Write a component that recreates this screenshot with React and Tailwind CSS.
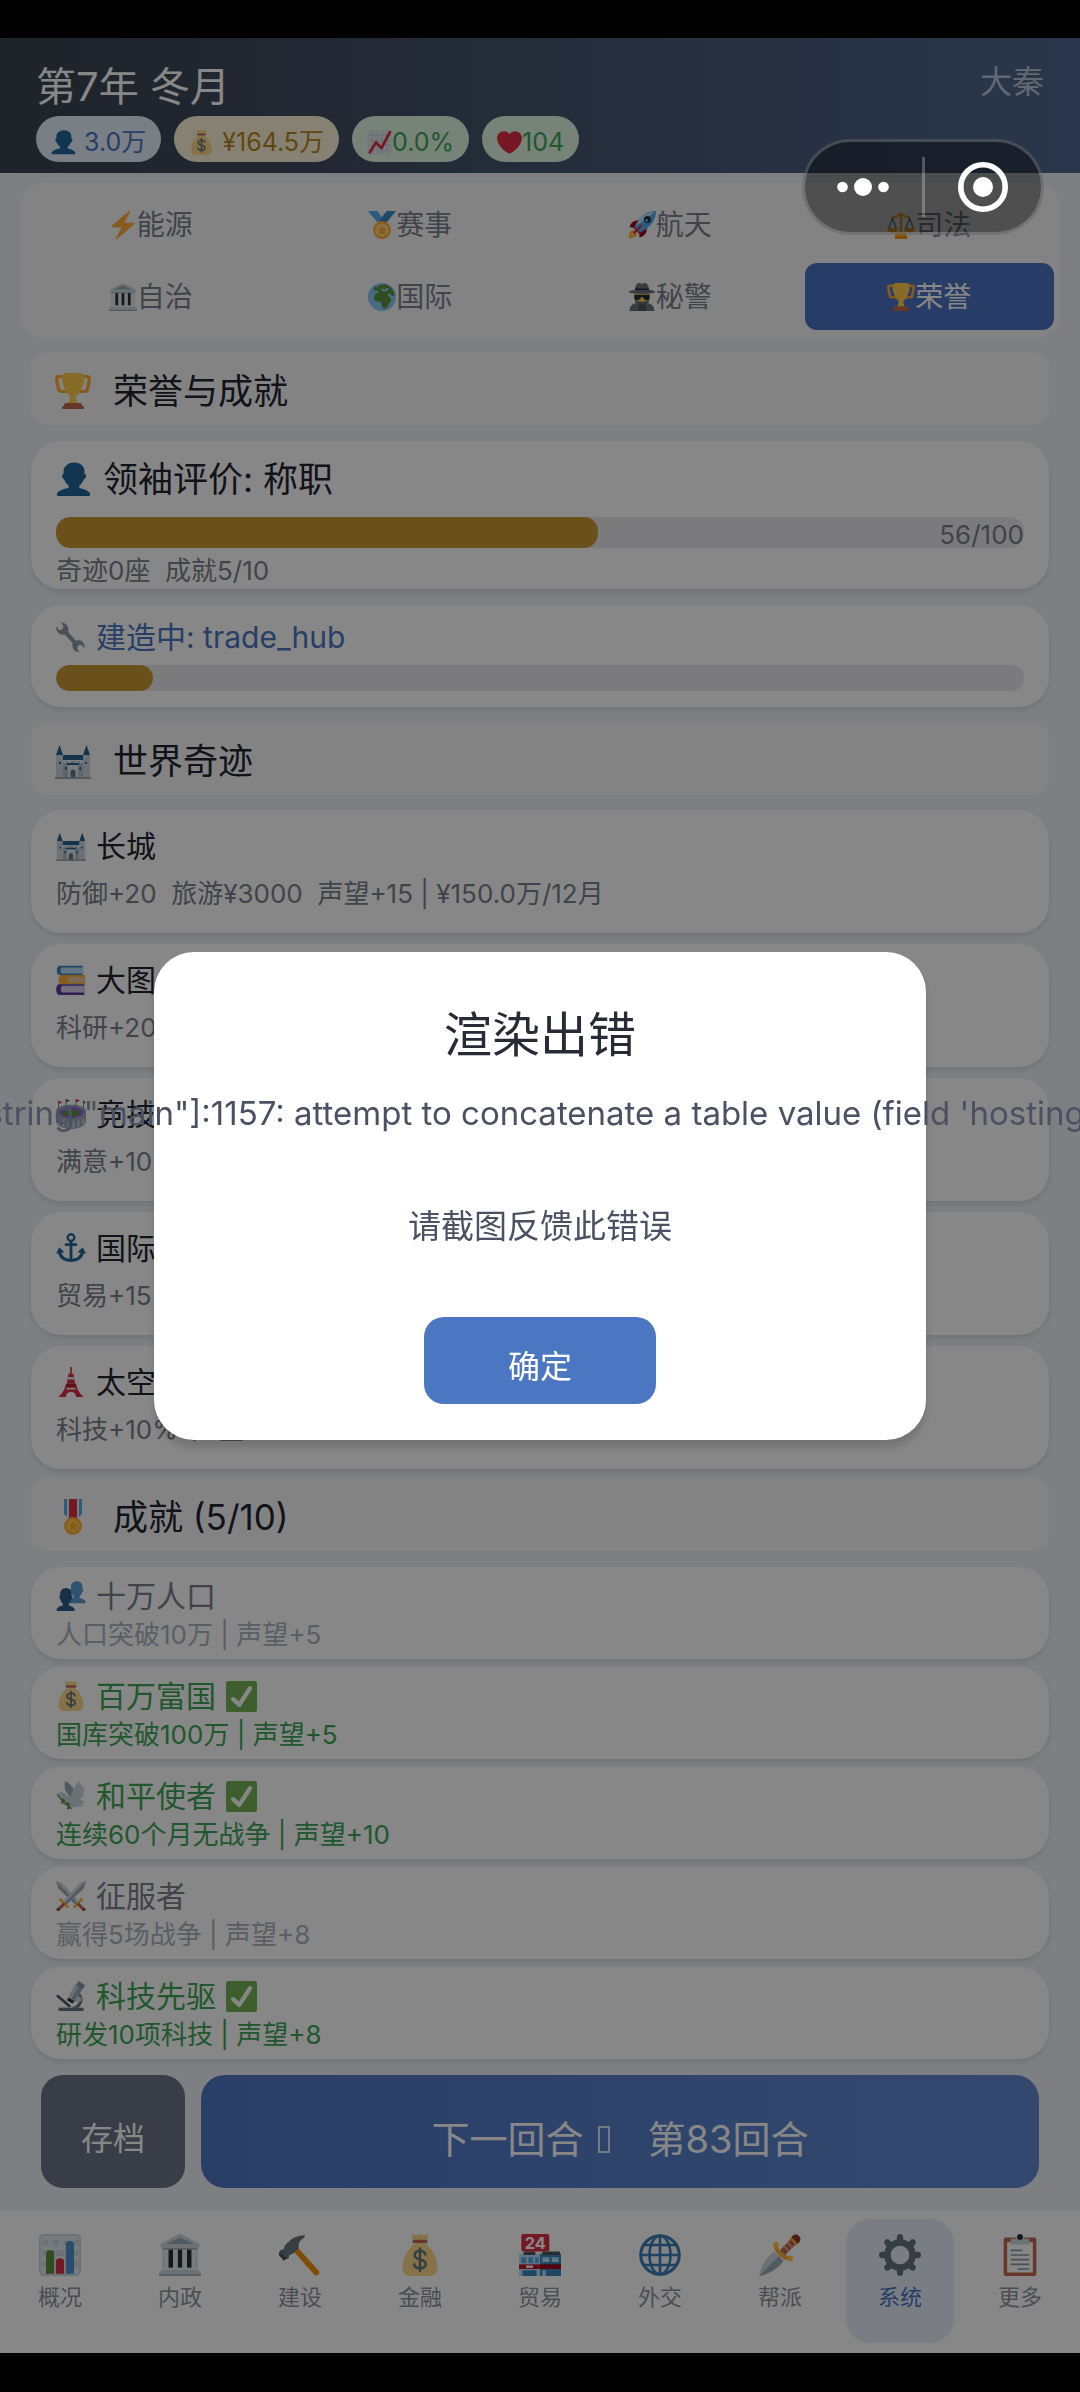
import { useState } from 'react';
import clsx from 'clsx';

const TROPHY_HANDLES =
  'M5.123 5h6C12.227 5 13 4.896 13 6V4c0-1.104-.773-2-1.877-2h-8c-2 0-3.583 2.125-3 5 0 0 1.791 9.375 1.917 9.958C2.373 18.5 4.164 20 6.081 20h6.958c1.105 0-.039-1.896-.039-3v-2c0 1.104-.773 2-1.877 2h-4c-1.104 0-1.833-1.042-2-2S3.539 7.667 3.539 7.667C3.206 5.75 4.018 5 5.123 5zm25.812 0h-6C23.831 5 22 4.896 22 6V4c0-1.104 1.831-2 2.935-2h8c2 0 3.584 2.125 3 5 0 0-1.633 9.419-1.771 10-.354 1.5-2.042 3-4 3h-7.146C21.914 20 22 18.104 22 17v-2c0 1.104 1.831 2 2.935 2h4c1.104 0 1.834-1.042 2-2s1.584-7.333 1.584-7.333C32.851 5.75 32.04 5 30.935 5z';

const BUST =
  'M24 26.799v-2.566c2-1.348 4.08-3.779 4.703-6.896.186.103.206.17.413.17.991 0 1.709-1.287 1.709-2.873 0-1.562-.823-2.827-1.794-2.865.187-.674.293-1.577.293-2.735C29.324 5.168 26 .527 18.541.527c-6.629 0-10.777 4.641-10.777 8.507 0 1.123.069 2.043.188 2.755-.911.137-1.629 1.352-1.629 2.845 0 1.587.804 2.873 1.796 2.873.206 0 .025-.067.209-.17C8.952 20.453 11 22.885 13 24.232v2.414c-5 .645-12 3.437-12 6.23v1.061C1 35 2.076 35 3.137 35h29.725C33.924 35 35 35 35 33.938v-1.061c0-2.615-6-5.225-11-6.078z';

// All drawings share a 36 x 36 grid
const ICONS = {
  person: <path fill="#226699" d={BUST} />,
  people: (
    <>
      <g transform="translate(13 0) scale(0.64 0.76)">
        <path fill="#5C9BD5" d={BUST} />
      </g>
      <g transform="translate(0 8) scale(0.64 0.8)">
        <path fill="#2A5C8C" d={BUST} />
      </g>
    </>
  ),
  bag: (
    <>
      <path fill="#FDD888" d="M31.9 21.8C30.1 15.5 24.8 9.5 22.6 8.6c-1.5-.6-7.7-.6-9.2 0C11.2 9.5 5.9 15.5 4.1 21.8 2.3 27.5 1.5 36 10.5 36h15c9 0 8.2-8.5 6.4-14.2z" />
      <path fill="#FDD888" d="M12 5c-1-2-1.5-4-.5-4.8 1-.6 2.5 1 3.5 1S16.5 0 18 0s2 1.2 3 1.2 2.5-1.6 3.5-1C25.5 1 25 3 24 5z" />
      <path fill="#BF6952" d="M24.5 6.5c0 .8-.6 1.5-1.4 1.5H12.9c-.8 0-1.4-.7-1.4-1.5S12.1 5 12.9 5h10.2c.8 0 1.4.7 1.4 1.5z" />
      <path fill="none" stroke="#67757F" strokeWidth="2.2" strokeLinecap="round" d="M22.7 17.5c-.6-2-2.5-3-4.7-3-2.7 0-4.6 1.4-4.6 3.7 0 5 9.5 2.5 9.5 7.5 0 2.4-2.2 3.8-4.9 3.8-2.6 0-4.6-1.2-5-3.5M18 12.5v19" />
    </>
  ),
  chartUp: (
    <>
      <rect width="36" height="36" rx="3" fill="#E1E8ED" />
      <path stroke="#BDC9D2" strokeWidth="1" fill="none" d="M1 8h34M1 15h34M1 22h34M1 29h34M8 1v34M15 1v34M22 1v34M29 1v34" />
      <path fill="none" stroke="#DD2E44" strokeWidth="4" strokeLinecap="round" strokeLinejoin="round" d="M4 32l9-14 8 8L33 3" />
    </>
  ),
  heart: (
    <path fill="#DD2E44" d="M35.885 11.833c0-5.45-4.418-9.868-9.867-9.868-3.308 0-6.227 1.633-8.018 4.129-1.791-2.496-4.71-4.129-8.017-4.129-5.45 0-9.868 4.417-9.868 9.868 0 .772.098 1.52.266 2.241C1.751 22.587 11.216 31.568 18 34.034c6.783-2.466 16.249-11.447 17.617-19.959.17-.721.268-1.469.268-2.242z" />
  ),
  bolt: (
    <path fill="#FFAC33" d="M32.938 15.651C32.792 15.26 32.418 15 32 15H19.925L26.89 1.458c.219-.426.106-.947-.271-1.243C26.437.071 26.218 0 26 0c-.233 0-.466.082-.653.243L18 6.588 3.347 19.243c-.316.273-.43.714-.284 1.105S3.582 21 4 21h12.075L9.11 34.542c-.219.426-.106.947.271 1.243.182.144.401.215.619.215.233 0 .466-.082.653-.243L18 29.412l14.653-12.655c.317-.273.43-.714.285-1.106z" />
  ),
  medal: (
    <>
      <path fill="#55ACEE" d="M0 0h12l9 12-7 5z" />
      <path fill="#3B88C3" d="M36 0H24l-9 12 7 5z" />
      <circle cx="18" cy="24.5" r="11.5" fill="#FFAC33" />
      <circle cx="18" cy="24.5" r="8.5" fill="#FFD983" />
      <path fill="#FFAC33" d="M18 18l2 4.3 4.7.6-3.5 3.2.9 4.7L18 28.5l-4.1 2.3.9-4.7-3.5-3.2 4.7-.6z" />
    </>
  ),
  rocket: (
    <>
      <path fill="#FFAC33" d="M1 35c0-5 1-9 5-11l6 6c-2 4-6 5-11 5z" />
      <path fill="#FFCC4D" d="M4 32c0-3 1-5 3-6l3 3c-1 2-3 3-6 3z" />
      <path fill="#A0041E" d="M2 21c2-8 8-10 15-9l-7 10zM15 34c8-2 10-8 9-15l-10 7z" />
      <path fill="#A0041E" d="M7 22l4-3 6 6-3 4z" />
      <path fill="#55ACEE" d="M36 0c0 8-3 15-10 21-3 3-7 5-11 7l-7-7c2-4 4-8 7-11C21 3 28 0 36 0z" />
      <path fill="#BBDDF5" d="M34 1c-8 1-14 4-19 9-2 3-4 6-5 9 8-5 17-11 24-18z" />
      <circle cx="25" cy="11" r="4.5" fill="#292F33" />
      <circle cx="24" cy="12" r="2" fill="#55ACEE" />
      <path fill="none" stroke="#DD2E44" strokeWidth="3" strokeLinecap="round" d="M8 28l9-9" />
    </>
  ),
  scales: (
    <>
      <path fill="#FFAC33" d="M16.5 3a1.5 1.5 0 013 0v26h-3z" />
      <path fill="#FFAC33" d="M11 30c0-2 3-3 7-3s7 1 7 3v3H11z" />
      <path fill="#F4900C" d="M10 32h16v4H10z" />
      <path fill="none" stroke="#FFAC33" strokeWidth="2.5" strokeLinecap="round" d="M7 8c5 1 6-3 11-3s6 4 11 3" />
      <path fill="none" stroke="#66757F" strokeWidth="1.6" d="M7 9L2 23M7 9l5 14M29 9l-5 14M29 9l5 14" />
      <path fill="#FFAC33" d="M0 22h14c0 4-3 6-7 6s-7-2-7-6zM22 22h14c0 4-3 6-7 6s-7-2-7-6z" />
    </>
  ),
  bank: (
    <>
      <path fill="#CCD6DD" d="M3 9h30v24H3z" />
      <path fill="#292F33" d="M8 13h4v16H8zM16 13h4v16h-4zM24 13h4v16h-4z" />
      <path fill="#E1E8ED" d="M4 12h4v18H4zM12 12h4v18h-4zM20 12h4v18h-4zM28 12h4v18h-4z" />
      <path fill="#CCD6DD" d="M1 10c0-1 1-2 3-3L17 .3c.7-.4 1.3-.4 2 0L32 7c2 1 3 2 3 3s-1 2-2 2H3c-1 0-2-1-2-2z" />
      <path fill="#99AAB5" d="M6 8.500L18 3l12 5.500z" />
      <path fill="#E1E8ED" d="M3 29h30v3H3z" />
      <path fill="#CCD6DD" d="M0 34c0-1.500 1-3 3-3h30c2 0 3 1.500 3 3v2H0z" />
      <path fill="#99AAB5" d="M3 12h30v1.200H3zM0 34.500h36V36H0z" />
    </>
  ),
  earth: (
    <>
      <circle cx="18" cy="18" r="18" fill="#88C9F9" />
      <path fill="#5C913B" d="M15 3c4-2 9-1 12 1 4 3 7 8 7 12l-3 1-3-4-3 2 4 5c2 2 0 5-2 6-1 4-3 7-6 7-3-1-3-5-4-8-1-2-4-1-7-2-3-2-3-6 0-9 1-2 3-1 5-2l-4-2c-2-3 1-6 4-7z" />
      <path fill="#88C9F9" d="M17 7l5 1 3-2 2 2-4 3-6-1z" />
      <path fill="#5C913B" d="M7 7l3-3 1 3-3 4z" />
    </>
  ),
  spy: (
    <>
      <circle cx="18" cy="17" r="10" fill="#FFCC4D" />
      <path fill="#66757F" d="M2 36c0-7 4-9 8-10l-2-6c4 3 7 4 10 4s6-1 10-4l-2 6c4 1 8 3 8 10z" />
      <path fill="#4B545D" d="M15 25l3 3 4-3 2 11H13z" />
      <path fill="#66757F" d="M9 9c0-6 3-9 5-9 2 0 3 1 4 1s2-1 4-1 5 3 5 9z" />
      <path fill="#292F33" d="M9 7h18v4H9z" />
      <path fill="#66757F" d="M1 12c0-2 5-3 8-3h18c3 0 8 1 8 3 0 1-7 2-17 2S1 13 1 12z" />
      <path fill="#292F33" d="M8 15h20v3c0 3-2 4-4 4-3 0-4-2-5-4h-2c-1 2-2 4-5 4-2 0-4-1-4-4z" />
    </>
  ),
  trophy: (
    <>
      <path fill="#FFAC33" d={TROPHY_HANDLES} />
      <path fill="#FFCC4D" d="M20.832 22c0-6.958-2.709 0-2.709 0s-3-6.958-3 0-3.291 10-3.291 10h12.292c-.001 0-3.292-3.042-3.292-10z" />
      <path fill="#FFCC4D" d="M29.123 6.577c0 6.775-6.77 18.423-11 18.423-4.231 0-11-11.649-11-18.423 0-5.775 2.75-6.577 3.75-6.577h14.5c1 0 3.75.802 3.75 6.577z" />
      <path fill="#C1694F" d="M27 33c0 1.104.227 2-.877 2h-16C9.018 35 9 34.104 9 33v-1c0-1.104 1.164-2 2.206-2h13.917c1.042 0 1.877.896 1.877 2v1z" />
      <path fill="#C1694F" d="M29 34.625c0 .76.165 1.375-1.252 1.375H8.498C7.206 36 7 35.385 7 34.625v-.25C7 33.615 7.738 33 8.498 33h19.25c.759 0 1.252.615 1.252 1.375v.25z" />
    </>
  ),
  wrench: (
    <path fill="#8899A6" d="M28 22c-1.500-.5-3 0-4 .5L14.500 12c.8-2 .6-4.500-.5-6.500C12.500 2.500 9.500.5 6 .3L9 5.500 7.500 9 3.500 9.500.3 5C-.3 8.500 1 12 4 14c2 1.300 4.500 1.600 6.500 1L20 25.500c-.8 2-.5 4.500.8 6.500 1.500 2.500 4 4 7 4l-2.500-4.500 1.500-3.500 4-.5 3.200 4c.8-3-.2-6.500-3-8.500-1-.6-2-1-3-1z" />
  ),
  castle: (
    <>
      <path fill="#CCD6DD" d="M1 12h7v23H1zM28 12h7v23h-7z" />
      <path fill="#B4C0CA" d="M8 18h20v17H8z" />
      <path fill="#2B6090" d="M1 12L4.500 2 8 12zM28 12l3.500-10L35 12zM8 12h20v5H8z" />
      <path fill="#E1E8ED" d="M8 17h3v3H8zM13 17h3v3h-3zM20 17h3v3h-3zM25 17h3v3h-3zM13 22h10v13H13z" />
      <path fill="#2B6090" d="M12 20h12v2H12zM4 19h2v2H4zM30 19h2v2h-2zM10 24h1.500v3H10zM24.500 24H26v3h-1.500z" />
      <path fill="#66757F" d="M15.500 35v-6c0-3 5-3 5 0v6z" />
      <path fill="#99AAB5" d="M0 34h36v2H0z" />
    </>
  ),
  books: (
    <>
      <path fill="#3B88C3" d="M4 1h28v3H7v6h25v2H4c-4 0-4-11 0-11z" />
      <path fill="#BBDDF5" d="M7 3h26v7H7c-2 0-2-7 0-7z" />
      <path fill="#FFAC33" d="M6 12h29v11H6c-4 0-4-11 0-11z" />
      <path fill="#E8C99A" d="M15 14h20v7H15z" />
      <path fill="#5F3A9E" d="M4 23h30v13H4c-5 0-5-13 0-13z" />
      <path fill="#D8CDEB" d="M8 25h26v8H8c-3 0-3-8 0-8z" />
    </>
  ),
  stadium: (
    <>
      <path fill="#99AAB5" d="M0 15c0-5 8-8 18-8s18 3 18 8v12c0 5-8 9-18 9S0 32 0 27z" />
      <ellipse cx="18" cy="16" rx="15" ry="7" fill="#9266CC" />
      <ellipse cx="18" cy="17" rx="10" ry="4" fill="#5C913B" />
      <path fill="none" stroke="#CCD6DD" strokeWidth="2" d="M3 24v7M9 26v8M15 27v8M21 27v8M27 26v8M33 24v7" />
      <path stroke="#66757F" strokeWidth="1" d="M3 2v11M12 0v9M24 0v9M33 2v11" />
      <path fill="#DD2E44" d="M3 2l5 2-5 2zM24 0l5 2-5 2z" />
      <path fill="#3E721D" d="M12 0l5 2-5 2zM33 2l3 2-3 2z" />
    </>
  ),
  anchor: (
    <>
      <circle cx="18" cy="5.5" r="4" fill="none" stroke="#226699" strokeWidth="2.8" />
      <path fill="none" stroke="#226699" strokeWidth="3.4" strokeLinecap="round" d="M18 10v22M12 14h12" />
      <path fill="none" stroke="#226699" strokeWidth="3.8" d="M4 22c1 7 6 11 14 11s13-4 14-11" />
      <path fill="#226699" d="M0 25l4-8 6 6zM36 25l-4-8-6 6z" />
    </>
  ),
  tower: (
    <>
      <path fill="#DD2E44" d="M17 0h2v8h-2zM15 8h6l2 12h-10z" />
      <path fill="#E1E8ED" d="M14.500 12h7l.6 3h-8.200z" />
      <path fill="#BE1931" d="M12 20h12l1 4H11z" />
      <path fill="#DD2E44" d="M11 24h14c2 6 5 9 8 12h-9c0-4-2-6-6-6s-6 2-6 6H3c3-3 6-6 8-12z" />
      <path fill="#E1E8ED" d="M13 25h10l1 2H12z" />
    </>
  ),
  ribbon: (
    <>
      <path fill="#55ACEE" d="M9 0h18v15l-5 5h-8l-5-5z" />
      <path fill="#E1E8ED" d="M12 0h12v19H12z" />
      <path fill="#DD2E44" d="M14 0h8v20h-8z" />
      <circle cx="18" cy="27" r="9" fill="#FFAC33" />
      <circle cx="18" cy="27" r="6.5" fill="#FFCC4D" />
      <path fill="#FFAC33" d="M18 21.500l1.700 3.500 3.800.5-2.800 2.700.7 3.800-3.400-1.800-3.400 1.800.7-3.800-2.800-2.700 3.800-.5z" />
    </>
  ),
  check: (
    <>
      <rect width="36" height="36" rx="3" fill="#77B255" />
      <path fill="#FFF" d="M29.28 6.362c-1.156-.751-2.704-.422-3.458.736L14.936 23.877l-5.029-4.65c-1.014-.938-2.596-.875-3.533.138-.937 1.014-.875 2.596.139 3.533l7.209 6.666c.48.445 1.09.665 1.696.665.673 0 1.534-.282 2.099-1.139.332-.506 12.5-19.27 12.5-19.27.751-1.159.421-2.707-.737-3.458z" />
    </>
  ),
  dove: (
    <>
      <path fill="#99AAB5" d="M20 20C12 16 9 9 11 0c6 3 11 9 13 16z" />
      <path fill="#CCD6DD" d="M18 17C21 12 21 5 28 0c0 4 4 6 6 9 0 8-3 14-9 15z" />
      <path fill="#CCD6DD" d="M3 15c2-2 6-2 8 1 5 3 9 2 14 5l10 4-4 2 3 3-10 1c-6 2-14 0-17-6-1-3-1-5-3-7L0 16z" />
      <path fill="none" stroke="#5C913B" strokeWidth="1.8" strokeLinecap="round" d="M2 17c4 6 10 10 16 16" />
      <path fill="#5C913B" d="M6 22c3-2 5 0 5 2-2 1-4 0-5-2zM12 26c4-1 5 1 5 3-3 0-4-1-5-3zM13 34c0-4 3-5 4-4 0 3-2 5-4 4zM6 27c0-3 2-3 3-3 1 2-1 4-3 3z" />
    </>
  ),
  swords: (
    <>
      <path fill="#CCD6DD" d="M0 0l7 2 20 22-4 4L3 9z" />
      <path fill="#99AAB5" d="M0 0l25 26-2 2L3 9z" />
      <path fill="#CCD6DD" d="M36 0l-7 2L9 24l4 4L33 9z" />
      <path fill="#99AAB5" d="M36 0L11 26l2 2L33 9z" />
      <path fill="none" stroke="#FFAC33" strokeWidth="3" strokeLinecap="round" d="M5 22l9 9M31 22l-9 9" />
      <path fill="none" stroke="#BF6952" strokeWidth="3.6" strokeLinecap="round" d="M9 28l-6 6M27 28l6 6" />
      <circle cx="2.5" cy="34" r="2" fill="#8A4B38" />
      <circle cx="33.5" cy="34" r="2" fill="#8A4B38" />
    </>
  ),
  microscope: (
    <>
      <path fill="#66757F" d="M3 32h30v4H3z" />
      <path fill="#66757F" d="M26 13c7 4 8 13 1 19h-9c9-2 12-8 7-13z" />
      <path fill="#99AAB5" d="M23 4l9 5-8 16-9-5z" />
      <path fill="#CCD6DD" d="M23 4l4 2-9 16-3-2z" />
      <path fill="#8899A6" d="M27 0l8 5-3 5-8-5z" />
      <path fill="#292F33" d="M15 20l7 4-2 3-7-4z" />
      <path fill="none" stroke="#4B545D" strokeWidth="3" strokeLinecap="round" d="M2 18l14 12" />
      <circle cx="27" cy="22" r="3.5" fill="#CCD6DD" />
    </>
  ),
  chartBar: (
    <>
      <rect width="36" height="36" rx="4" fill="#CCD6DD" />
      <rect x="1.5" y="1.5" width="33" height="33" rx="3" fill="#E1E8ED" />
      <path fill="#CCD6DD" d="M3 5h5v5H3zM12 5h5v5h-5zM21 5h2v5h-2zM3 14h3v5H3zM14 14h8v5h-8zM30 5h4v5h-4zM30 14h4v5h-4zM30 23h4v5h-4zM3 23h3v5H3z" />
      <path fill="#5C913B" d="M6 16c0-3 7-3 7 0v18H6z" />
      <path fill="#DD2E44" d="M14.500 23c0-3 7-3 7 0v11h-7z" />
      <path fill="#5092CF" d="M23 8c0-3 7-3 7 0v26h-7z" />
    </>
  ),
  hammer: (
    <>
      <path fill="none" stroke="#F4900C" strokeWidth="5" strokeLinecap="round" d="M15 14l17 19" />
      <path fill="#66757F" d="M22 1C15 1 10 4 5 10l-1 3-3 1-1 4 4 4 4-1 1-3 3-1 5-5c-1-4 1-7 5-9z" />
      <path fill="#4B545D" d="M0 15l7 6-3 2-4-5z" />
    </>
  ),
  store: (
    <>
      <path fill="#BBDDF5" d="M0 17h18v19H0z" />
      <path fill="#3B88C3" d="M18 17h18v19H18zM3 31h12v5H3z" />
      <path fill="#55ACEE" d="M2 20h4v5H2zM8 20h4v5H8zM14 20h3v5h-3z" />
      <path fill="#BBDDF5" d="M20 20h6v4h-6zM28 20h6v4h-6zM20 31h3v5h-3z" />
      <path fill="#BE1931" d="M0 26h18v4H0z" />
      <path fill="#A0041E" d="M18 26h18v4H18z" />
      <path fill="#FFF" d="M6 27h6v2H6z" />
      <path fill="#4B545D" d="M4 15h10v3H4zM20 15h15v3H20z" />
      <rect x="2" width="24" height="15" rx="2" fill="#DD2E44" />
      <text x="14" y="12.5" textAnchor="middle" fontSize="14" fontWeight="700" fill="#FFF">24</text>
    </>
  ),
  globe: (
    <>
      <circle cx="18" cy="18" r="16.5" fill="#F5F8FA" stroke="#3B7DB5" strokeWidth="2.6" />
      <ellipse cx="18" cy="18" rx="9" ry="16.5" fill="none" stroke="#3B7DB5" strokeWidth="2.2" />
      <path fill="none" stroke="#3B7DB5" strokeWidth="2.2" d="M18 1v34M1 18h34M4 9.500h28M4 26.500h28" />
    </>
  ),
  dagger: (
    <>
      <path fill="#CCD6DD" d="M0 36c2-9 6-16 13-21l8 8C16 30 9 34 0 36z" />
      <path fill="#99AAB5" d="M0 36L17 19l4 4C16 30 9 34 0 36z" />
      <path fill="none" stroke="#BF6952" strokeWidth="6" d="M20 16l10-10" />
      <path fill="none" stroke="#E8A58F" strokeWidth="1.5" d="M21 10l5 5M24 7l5 5" />
      <path fill="none" stroke="#FFAC33" strokeWidth="3.6" strokeLinecap="round" d="M14 9c1 6 6 11 12 12" />
      <circle cx="14.5" cy="9" r="2.4" fill="#FFCC4D" />
      <circle cx="27" cy="21" r="2.4" fill="#FFCC4D" />
      <circle cx="31.5" cy="4.5" r="4" fill="#8A3B22" />
      <path fill="#FFAC33" d="M26 4l2-1 5 5-1 2z" />
    </>
  ),
  gear: (
    <>
      <circle cx="18" cy="18" r="10.8" fill="none" stroke="#66757F" strokeWidth="5.6" />
      <path fill="none" stroke="#66757F" strokeWidth="5.4" strokeLinecap="round" d="M18 2.700v4M18 29.300v4M2.700 18h4M29.300 18h4M7.200 7.200l3 3M25.800 25.800l3 3M28.800 7.200l-3 3M10.200 25.800l-3 3" />
    </>
  ),
  clipboard: (
    <>
      <rect x="4" y="3" width="28" height="33" rx="2" fill="#C1694F" />
      <path fill="#FFF" d="M7 7h22v26H7z" />
      <path fill="#CCD6DD" d="M10 4h4c1-2 2-3 4-3s3 1 4 3h4v5H10z" />
      <circle cx="18" cy="2.5" r="2.5" fill="#292F33" />
      <path stroke="#8899A6" strokeWidth="1.4" d="M10 14h10M10 18h16M10 22h16M10 26h16M16 30h10" />
    </>
  ),
};

const STATS = [
  { icon: 'person', text: '3.0万', spaced: true, style: 'bg-[#e6eefc] text-[#4b76c1]' },
  { icon: 'bag', text: '¥164.5万', spaced: true, style: 'bg-[#fdf3d8] text-[#b5851f]' },
  { icon: 'chartUp', text: '0.0%', spaced: false, style: 'bg-[#e1f5e4] text-[#3da557]' },
  { icon: 'heart', text: '104', spaced: false, style: 'bg-[#e1f5e4] text-[#3da557]' },
];

const TABS = [
  { icon: 'bolt', label: '能源' },
  { icon: 'medal', label: '赛事' },
  { icon: 'rocket', label: '航天' },
  { icon: 'scales', label: '司法' },
  { icon: 'bank', label: '自治' },
  { icon: 'earth', label: '国际' },
  { icon: 'spy', label: '秘警' },
  { icon: 'trophy', label: '荣誉' },
];

const WONDERS = [
  { icon: 'castle', name: '长城', desc: '防御+20  旅游¥3000  声望+15 | ¥150.0万/12月' },
  { icon: 'books', name: '大图书馆', desc: '科研+20%  声望+10' },
  { icon: 'stadium', name: '竞技场', desc: '满意+10  声望+12' },
  { icon: 'anchor', name: '国际港', desc: '贸易+15%  声望+10' },
  { icon: 'tower', name: '太空塔', desc: '科技+10%  声望+20' },
];

const ACHIEVEMENTS = [
  { icon: 'people', name: '十万人口', desc: '人口突破10万 | 声望+5', done: false },
  { icon: 'bag', name: '百万富国', desc: '国库突破100万 | 声望+5', done: true },
  { icon: 'dove', name: '和平使者', desc: '连续60个月无战争 | 声望+10', done: true },
  { icon: 'swords', name: '征服者', desc: '赢得5场战争 | 声望+8', done: false },
  { icon: 'microscope', name: '科技先驱', desc: '研发10项科技 | 声望+8', done: true },
];

const NAV = [
  { icon: 'chartBar', label: '概况' },
  { icon: 'bank', label: '内政' },
  { icon: 'hammer', label: '建设' },
  { icon: 'bag', label: '金融' },
  { icon: 'store', label: '贸易' },
  { icon: 'globe', label: '外交' },
  { icon: 'dagger', label: '帮派' },
  { icon: 'gear', label: '系统' },
  { icon: 'clipboard', label: '更多' },
];

function Icon({ name, className }) {
  return (
    <svg viewBox="0 0 36 36" className={clsx('shrink-0', className)} aria-hidden="true">
      {ICONS[name]}
    </svg>
  );
}

function SectionTitle({ icon, children }) {
  return (
    <h2 className="flex items-center gap-[22px] rounded-2xl bg-[#f7f8fa] px-6 pt-[17px] pb-3 text-[35px] leading-[44px] text-[#1f2430]">
      <Icon name={icon} className="size-9" />
      {children}
    </h2>
  );
}

function Card({ className, children }) {
  return (
    <div className={clsx('rounded-[30px] bg-white px-[25px] shadow-[0_3px_5px_rgba(40,50,80,0.12)]', className)}>
      {children}
    </div>
  );
}

function ProgressBar({ value, label, className }) {
  return (
    <div className={clsx('relative overflow-hidden rounded-[14px] bg-[#e8e9ef]', className)}>
      <div className="h-full rounded-[14px] bg-[#c99a35]" style={{ width: `${value}%` }} />
      {label && (
        <span className="absolute inset-y-0 right-0 flex items-center pt-1 text-[26px] leading-none text-[#7a808c]">
          {label}
        </span>
      )}
    </div>
  );
}

function ErrorModal({ onClose }) {
  return (
    <div className="fixed inset-0 z-10 flex items-center justify-center overflow-hidden bg-black/47">
      <div
        role="alertdialog"
        aria-labelledby="error-title"
        className="flex w-[772px] flex-col items-center rounded-[40px] bg-white pt-[51px] pb-9 shadow-[0_8px_8px_rgba(0,0,0,0.15)]"
      >
        <h2 id="error-title" className="text-[48px] leading-[64px] text-[#262b36]">渲染出错</h2>
        <p className="mt-6 text-[33px] leading-[44px] whitespace-nowrap text-[#4a5162]">
          [string "main"]:1157: attempt to concatenate a table value (field 'hosting')
        </p>
        <p className="mt-[69px] text-[33px] leading-[44px] text-[#4a5162]">请截图反馈此错误</p>
        <button
          onClick={onClose}
          className="mt-[69px] w-[232px] rounded-[20px] bg-[#4b76c1] pt-7 pb-[15px] text-[32px] leading-[44px] text-white"
        >
          确定
        </button>
      </div>
    </div>
  );
}

// Host app menu, always above the game
function Capsule() {
  return (
    <div className="fixed top-[139px] right-9 z-20 flex h-24 w-[242px] items-center rounded-full border-[3px] border-white/20 bg-black/40">
      <button aria-label="菜单" className="flex h-full flex-1 items-center justify-center">
        <svg viewBox="0 0 52 20" className="h-5 w-[52px]" fill="#fff">
          <circle cx="5.5" cy="10" r="5.3" />
          <circle cx="26" cy="10" r="9" />
          <circle cx="46.5" cy="10" r="5.3" />
        </svg>
      </button>
      <span className="h-[60px] w-[3px] bg-white/25" />
      <button aria-label="关闭" className="flex h-full flex-1 items-center justify-center">
        <svg viewBox="0 0 50 50" className="size-[50px]">
          <circle cx="25" cy="25" r="22.2" fill="none" stroke="#fff" strokeWidth="5.6" />
          <circle cx="25" cy="25" r="10" fill="#fff" />
        </svg>
      </button>
    </div>
  );
}

export default function App() {
  const [tab, setTab] = useState('荣誉');
  const [page, setPage] = useState('系统');
  const [error, setError] = useState(true);

  return (
    <div className="flex min-h-screen flex-col bg-black pt-[38px] pb-[39px] font-['Inter','Noto_Sans_CJK_SC',sans-serif]">
      <header className="bg-linear-to-r from-[#3a434f] to-[#50678f] px-9 pt-[22px] pb-[11px]">
        <div className="mb-[2px] flex items-start justify-between">
          <h1 className="text-[40px] leading-[54px] text-white">第7年 冬月</h1>
          <span className="text-[32px] leading-[44px] text-[#b9c3d6]">大秦</span>
        </div>
        <div className="flex gap-[13px]">
          {STATS.map((s) => (
            <div key={s.icon} className={clsx('flex items-center rounded-full px-[15px] pt-[10px] pb-1 text-[25px] leading-8', s.style)}>
              <Icon name={s.icon} className={clsx('size-[25px]', s.spaced && 'mr-2')} />
              {s.text}
            </div>
          ))}
        </div>
      </header>

      <main className="flex-1 bg-[#edf0f6] px-[31px] pt-[10px]">
        <nav className="-mx-[11px] grid grid-cols-4 gap-x-[10px] gap-y-[5px] rounded-3xl bg-[#f7f8fa] px-[6px] py-2">
          {TABS.map((t) => (
            <button
              key={t.label}
              onClick={() => setTab(t.label)}
              className={clsx(
                'flex items-center justify-center rounded-xl pt-[14px] pb-[13px] text-[28px] leading-10',
                tab === t.label ? 'bg-[#4b72c0] text-white' : 'text-[#7a808c]'
              )}
            >
              <Icon name={t.icon} className="size-7" />
              {t.label}
            </button>
          ))}
        </nav>

        <section className="mt-[14px] flex flex-col gap-4">
          <SectionTitle icon="trophy">荣誉与成就</SectionTitle>
          <Card className="pt-4 pb-[2px]">
            <h3 className="flex items-center gap-3 text-[35px] leading-[44px] text-[#1f2430]">
              <Icon name="person" className="size-[35px]" />
              领袖评价: 称职
            </h3>
            <ProgressBar value={56} label="56/100" className="mt-4 h-[31px]" />
            <p className="mt-[7px] text-[26px] leading-8 whitespace-pre text-[#7a808c]">奇迹0座  成就5/10</p>
          </Card>
          <Card className="pt-3 pb-4">
            <h3 className="flex items-center gap-[10px] text-[30px] leading-10 text-[#4b76c1]">
              <Icon name="wrench" className="size-[30px]" />
              建造中: trade_hub
            </h3>
            <ProgressBar value={10} className="mt-2 h-[26px]" />
          </Card>
        </section>

        <section className="mt-[15px] flex flex-col gap-[11px]">
          <div className="mb-1">
            <SectionTitle icon="castle">世界奇迹</SectionTitle>
          </div>
          {WONDERS.map((w) => (
            <Card key={w.name} className="pt-4 pb-[23px]">
              <h3 className="flex items-center gap-[10px] text-[30px] leading-10 text-[#1f2430]">
                <Icon name={w.icon} className="size-[30px]" />
                {w.name}
              </h3>
              <p className="mt-3 text-[26px] leading-8 whitespace-pre text-[#7a808c]">{w.desc}</p>
            </Card>
          ))}
        </section>

        <section className="mt-[9px] flex flex-col gap-2">
          <div className="mb-2">
            <SectionTitle icon="ribbon">成就 (5/10)</SectionTitle>
          </div>
          {ACHIEVEMENTS.map((a) => (
            <Card key={a.name} className="pt-[9px] pb-2">
              <h3
                className={clsx(
                  'flex items-center gap-[10px] text-[30px] leading-10',
                  a.done ? 'text-[#3da557]' : 'text-[#7a808c]'
                )}
              >
                <Icon name={a.icon} className="size-[30px]" />
                {a.name}
                {a.done && <Icon name="check" className="size-[31px]" />}
              </h3>
              <p className={clsx('mt-[3px] text-[26px] leading-8', a.done ? 'text-[#3da557]' : 'text-[#adb1b9]')}>
                {a.desc}
              </p>
            </Card>
          ))}
        </section>

        <div className="flex gap-4 px-[10px] pt-4 pb-[22px]">
          <button className="w-36 rounded-[22px] bg-[#6a7486] pt-[42px] pb-[27px] text-[32px] leading-[44px] text-white">
            存档
          </button>
          <button className="flex flex-1 items-center justify-center rounded-[24px] bg-linear-to-r from-[#4f77c3] to-[#6289d2] pt-[42px] pb-[27px] text-[38px] leading-[44px] text-white">
            下一回合
            <span className="mr-[38px] ml-[14px] h-[27px] w-3 border-[2px] border-white/80" />
            第83回合
          </button>
        </div>
      </main>

      <nav className="grid grid-cols-9 border-t-2 border-[#f4f5f8] bg-white pt-[7px] pb-[10px]">
        {NAV.map((n) => (
          <button
            key={n.label}
            onClick={() => setPage(n.label)}
            className={clsx(
              'mx-[6px] flex flex-col items-center rounded-3xl pt-[15px] pb-8 text-[22px] leading-7',
              page === n.label ? 'bg-[#e6edf9] text-[#4b76c1]' : 'text-[#8d929d]'
            )}
          >
            <Icon name={n.icon} className="mb-[7px] size-[42px]" />
            {n.label}
          </button>
        ))}
      </nav>

      {error && <ErrorModal onClose={() => setError(false)} />}
      <Capsule />
    </div>
  );
}
